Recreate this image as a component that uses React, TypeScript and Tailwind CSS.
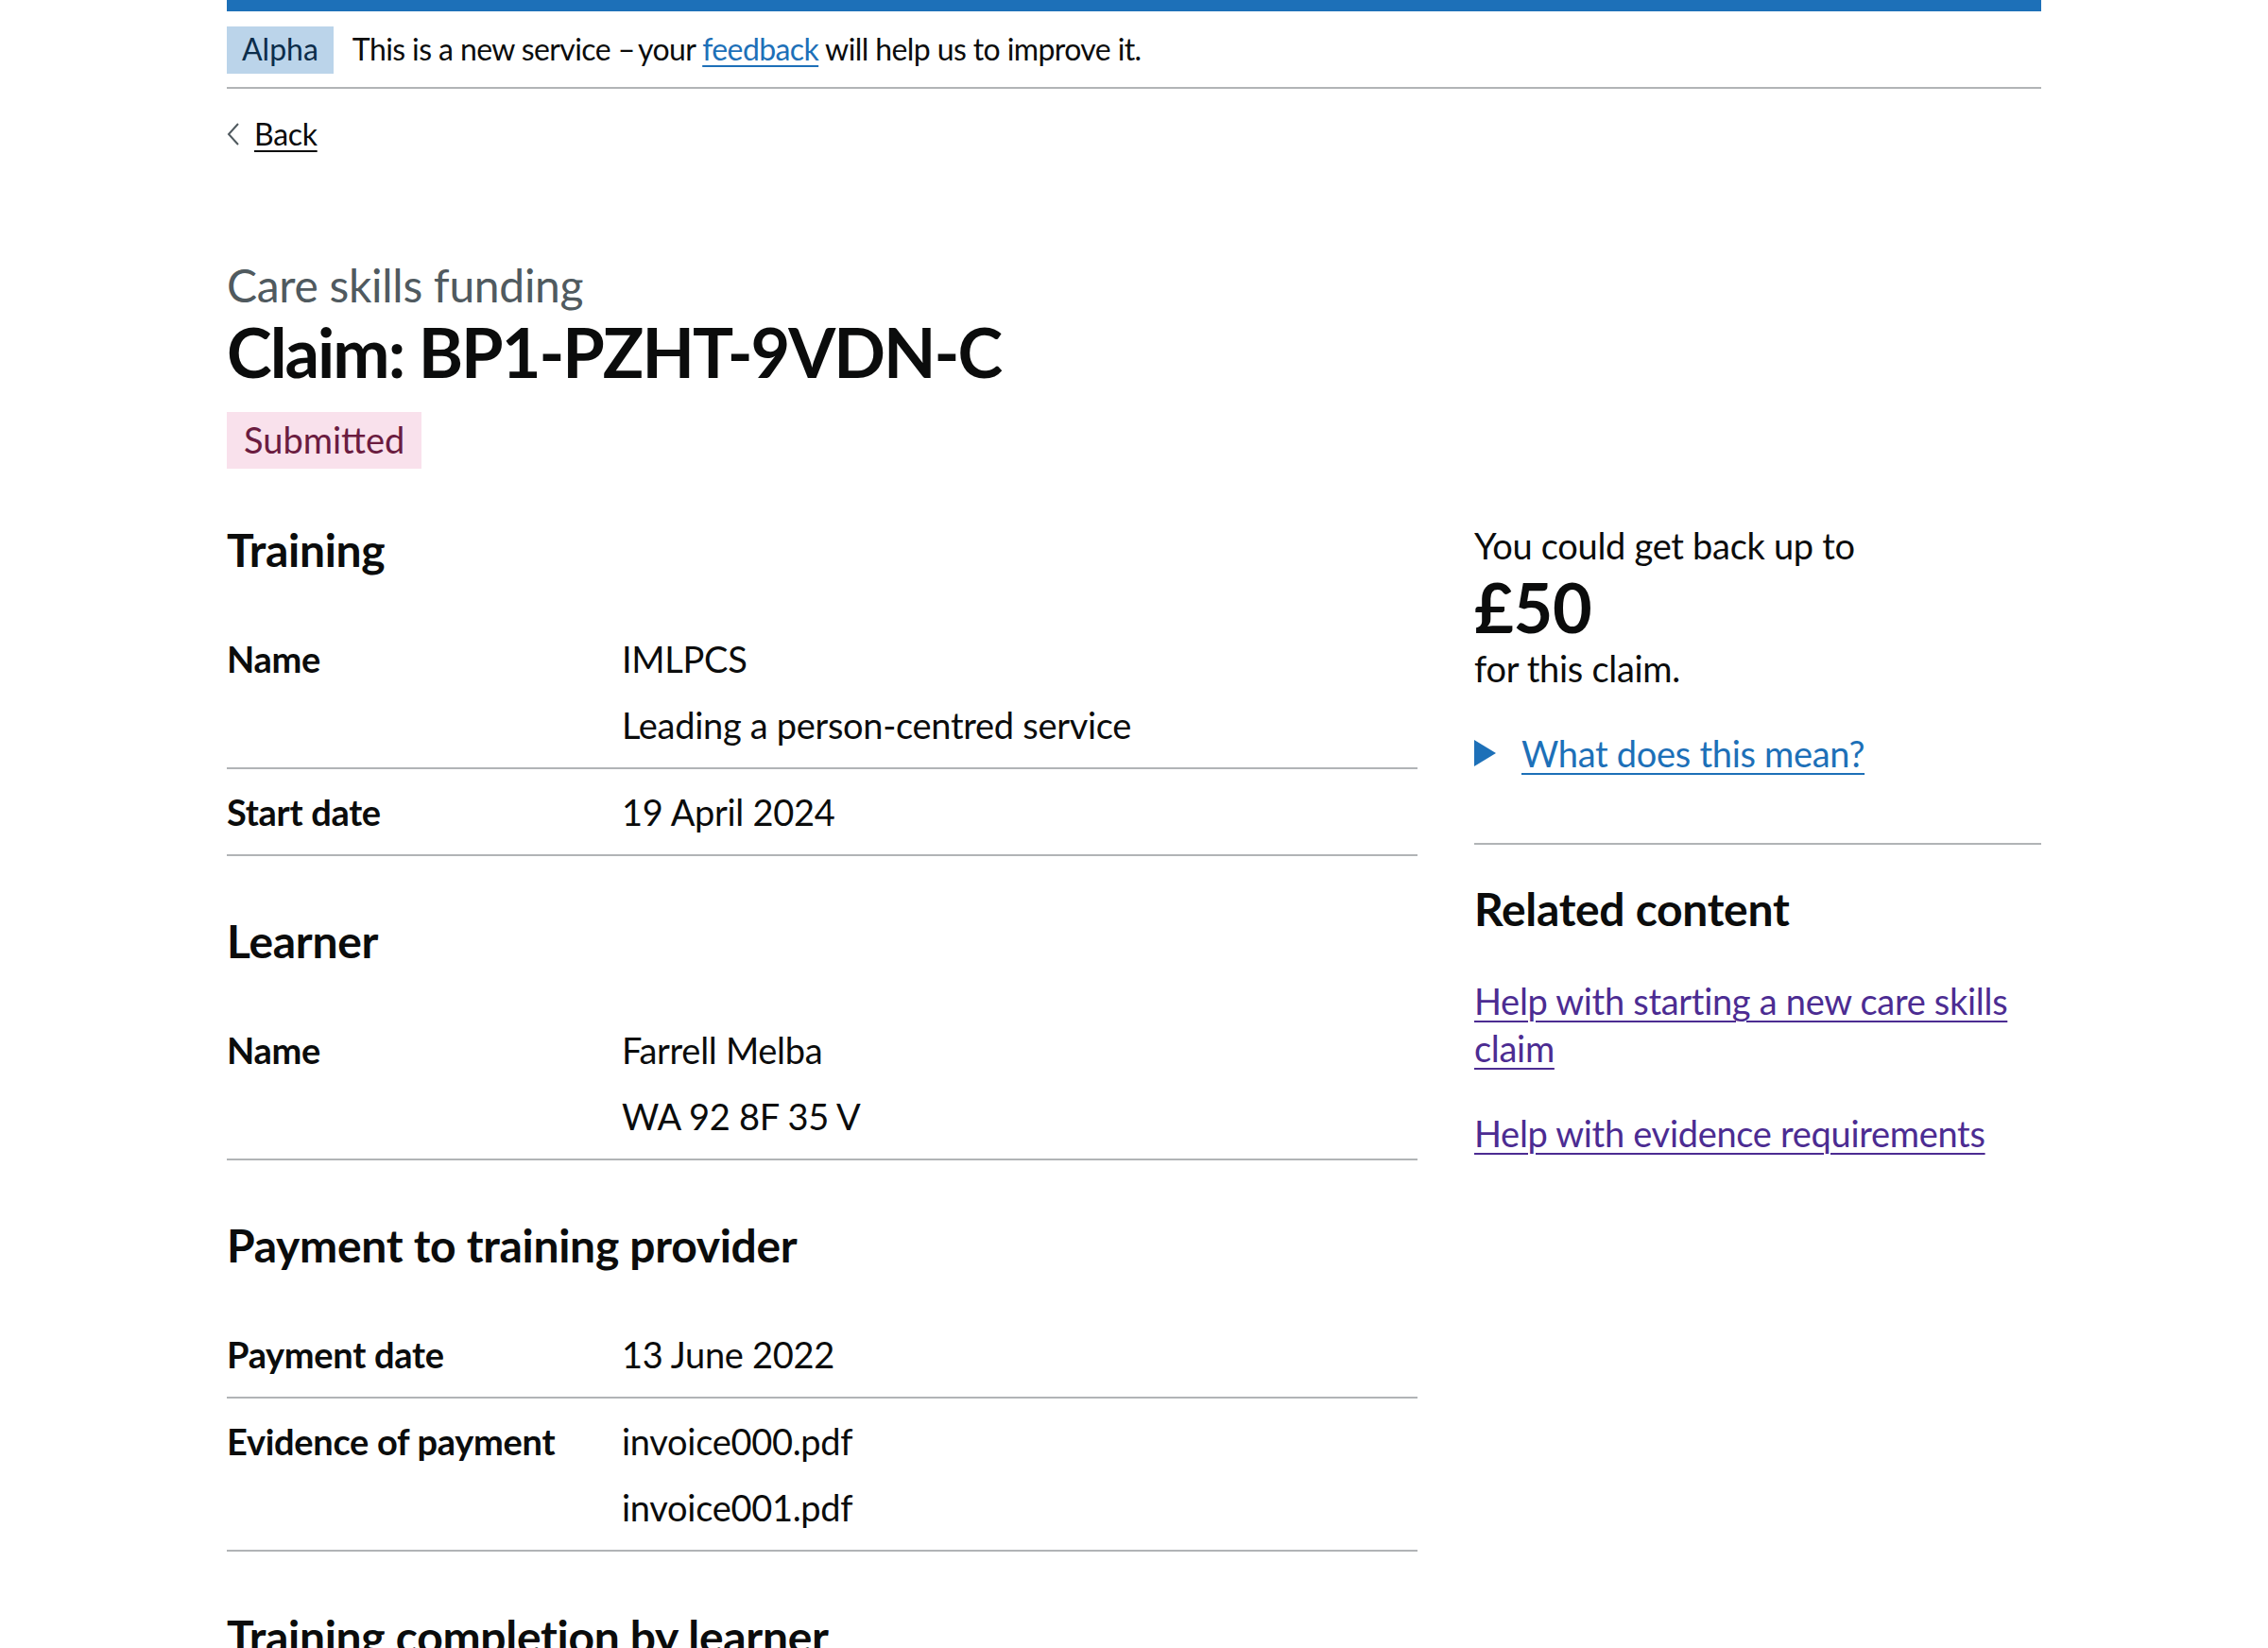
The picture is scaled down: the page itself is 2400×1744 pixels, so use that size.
const rows = {
  training: [
    { key: 'Name', values: ['IMLPCS', 'Leading a person-centred service'] },
    { key: 'Start date', values: ['19 April 2024'] },
  ],
  learner: [{ key: 'Name', values: ['Farrell Melba', 'WA 92 8F 35 V'] }],
  payment: [
    { key: 'Payment date', values: ['13 June 2022'] },
    { key: 'Evidence of payment', values: ['invoice000.pdf', 'invoice001.pdf'] },
  ],
};

function SummaryList({ items }: { items: { key: string; values: string[] }[] }) {
  return (
    <dl className="mb-[60px]">
      {items.map((row) => (
        <div key={row.key} className="flex border-b-2 border-[#b1b4b6] py-[20px]">
          <dt className="w-[418px] shrink-0 pr-[40px] font-bold">{row.key}</dt>
          <dd className="flex flex-col gap-[20px]">
            {row.values.map((v) => (
              <p key={v}>{v}</p>
            ))}
          </dd>
        </div>
      ))}
    </dl>
  );
}

function SectionHeading({ children }: { children: React.ReactNode }) {
  return <h2 className="mb-[40px] text-[48px] leading-[60px] font-bold">{children}</h2>;
}

export default function App() {
  return (
    <div className="min-h-screen bg-white font-['Lato',sans-serif] text-[38px] leading-[50px] tracking-[-0.3px] text-[#0b0c0c]">
      <div className="mx-auto w-[1920px]">
        <div className="h-[12px] bg-[#1d70b8]" />

        {/* phase banner */}
        <div className="flex items-center gap-[20px] border-b-2 border-[#b1b4b6] pt-[16px] pb-[14px]">
          <strong className="bg-[#bbd4ea] px-[16px] pt-[4px] pb-[6px] text-[32px] leading-[40px] font-normal tracking-normal text-[#0c2d4a]">
            Alpha
          </strong>
          <p className="-mt-[3px] text-[32px] leading-[40px] tracking-[-0.6px]">
            This is a new service –&thinsp;your{' '}
            <a href="#" className="text-[#1d70b8] underline decoration-2 underline-offset-[5px]">
              feedback
            </a>{' '}
            will help us to improve it.
          </p>
        </div>

        <a href="#" className="mt-[28px] flex items-center gap-[15px] text-[32px] leading-[40px]">
          <svg width="14" height="24" viewBox="0 0 14 24" className="shrink-0">
            <polyline points="12,1 2,12 12,23" fill="none" stroke="#505a5f" strokeWidth="2" />
          </svg>
          <span className="underline decoration-2 underline-offset-[5px]">Back</span>
        </a>

        <main className="pt-[110px]">
          <span className="block text-[48px] leading-[60px] text-[#505a5f]">Care skills funding</span>
          <h1 className="text-[72px] leading-[80px] font-bold tracking-[-2px]">Claim: BP1-PZHT-9VDN-C</h1>
          <strong className="mt-[24px] inline-block bg-[#f9e1ec] px-[18px] pt-[4px] pb-[6px] font-normal tracking-normal text-[#6b1c40]">
            Submitted
          </strong>

          <div className="mt-[56px] grid grid-cols-[1260px_600px] gap-x-[60px]">
            <div>
              <SectionHeading>Training</SectionHeading>
              <SummaryList items={rows.training} />
              <SectionHeading>Learner</SectionHeading>
              <SummaryList items={rows.learner} />
              <SectionHeading>Payment to training provider</SectionHeading>
              <SummaryList items={rows.payment} />
              <SectionHeading>Training completion by learner</SectionHeading>
            </div>

            <aside>
              <p>You could get back up to</p>
              <p className="text-[72px] leading-[80px] font-bold">£50</p>
              <p className="mb-[40px]">for this claim.</p>
              <div className="flex items-center gap-[27px]">
                <svg width="23" height="28" viewBox="0 0 23 28" className="shrink-0">
                  <polygon points="0,0 23,14 0,28" fill="#1d70b8" />
                </svg>
                <a href="#" className="text-[#1d70b8] underline decoration-2 underline-offset-[6px]">
                  What does this mean?
                </a>
              </div>
              <hr className="mt-[70px] border-t-2 border-[#b1b4b6]" />
              <h2 className="mt-[38px] text-[48px] leading-[60px] font-bold">Related content</h2>
              <ul className="mt-[42px] flex flex-col gap-[40px]">
                <li>
                  <a href="#" className="text-[#4c2c92] underline decoration-2 underline-offset-[6px]">
                    Help with starting a new care skills claim
                  </a>
                </li>
                <li>
                  <a href="#" className="text-[#4c2c92] underline decoration-2 underline-offset-[6px]">
                    Help with evidence requirements
                  </a>
                </li>
              </ul>
            </aside>
          </div>
        </main>
      </div>
    </div>
  );
}
